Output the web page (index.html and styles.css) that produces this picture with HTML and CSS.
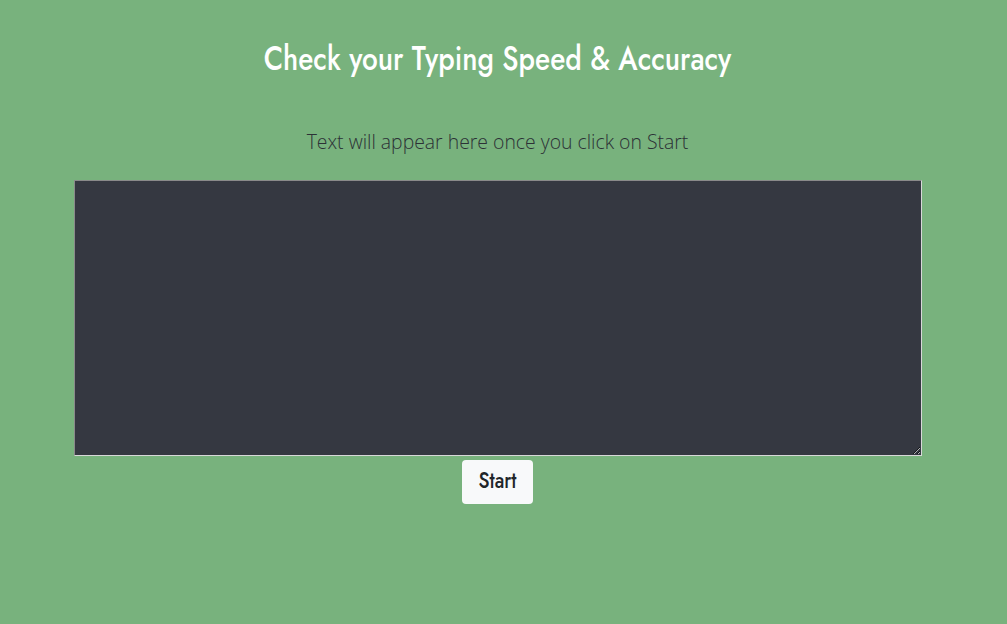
FILE: index.html
```html
<!DOCTYPE html>
<html>
<head>
<meta charset="utf-8">
<link rel="stylesheet" href="styles.css">
</head>
<body>
<main class="page">
  <h1 class="title">Check your Typing Speed &amp; Accuracy</h1>
  <p class="prompt">Text will appear here once you click on Start</p>
  <textarea class="typing-area"></textarea>
  <button class="start-btn"><span class="start-label">Start</span></button>
</main>
</body>
</html>
```
FILE: styles.css
```css
html, body {
  margin: 0;
  padding: 0;
  background: #78b27d;
  height: 100%;
}
.page {
  width: 995px;
  display: flex;
  flex-direction: column;
  align-items: center;
}
.title {
  margin: 39px 0 0;
  font-family: "Jost", "Josefin Sans", "Lato", sans-serif;
  font-weight: 500;
  font-size: 28px;
  line-height: 40px;
  color: #ffffff;
  transform: scaleY(1.2);
}
.prompt {
  margin: 49px 0 0;
  font-family: "Segoe UI", "Open Sans", "Noto Sans", sans-serif;
  font-weight: 300;
  font-size: 19.4px;
  line-height: 28px;
  color: #2c3136;
}
.typing-area {
  margin-top: 24px;
  width: 848px;
  height: 276px;
  box-sizing: border-box;
  background: #353841;
  border-top: 1px solid #8a8a8a;
  border-left: 1px solid #8a8a8a;
  border-right: 1px solid #d8d8d8;
  border-bottom: 1px solid #d8d8d8;
  padding: 2px;
  color: #fff;
  resize: both;
}
.start-btn {
  margin-top: 4px;
  width: 71px;
  height: 44px;
  border: none;
  border-radius: 4px;
  background: #f8f9fa;
  color: #212529;
  font-family: "Jost", "Josefin Sans", "Lato", sans-serif;
  font-size: 19px;
  font-weight: 500;
  padding: 0 0 4px;
}
.start-label {
  display: inline-block;
  transform: scaleY(1.2);
}
```
